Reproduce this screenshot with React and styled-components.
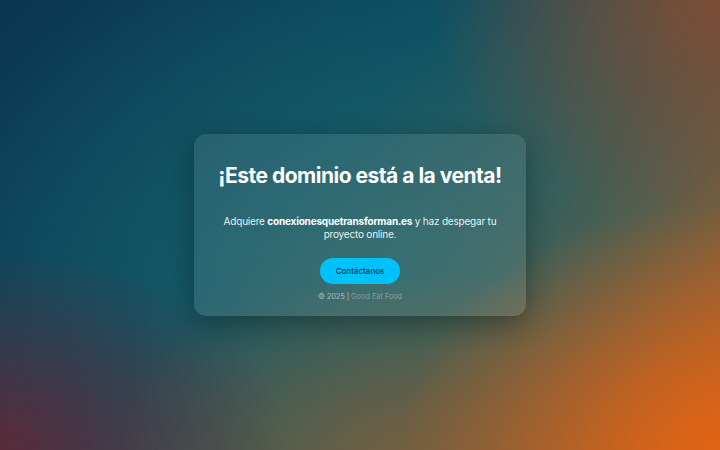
import React from "react";
import styled, { createGlobalStyle } from "styled-components";

const Global = createGlobalStyle`
  html, body { margin: 0; padding: 0; height: 100%; }
  body { font-family: Inter, "Noto Sans", sans-serif; }
  #root { height: 100%; }
`;

const Page = styled.div`
  height: 450px;
  width: 100%;
  display: flex;
  align-items: center;
  justify-content: center;
  background:
    radial-gradient(ellipse 45% 55% at 100% 100%, rgba(225,100,20,0.95), rgba(225,100,20,0) 100%),
    radial-gradient(ellipse 40% 50% at 100% 0%, rgba(130,75,50,0.9), rgba(130,75,50,0) 100%),
    radial-gradient(ellipse 40% 45% at 0% 100%, rgba(95,40,55,0.95), rgba(95,40,55,0) 100%),
    radial-gradient(ellipse 40% 40% at 55% 100%, rgba(125,95,60,0.7), rgba(125,95,60,0) 100%),
    radial-gradient(ellipse 60% 70% at 50% 55%, rgba(30,100,105,0.75), rgba(30,100,105,0) 100%),
    linear-gradient(135deg, #0a3550 0%, #0b4d62 40%, #3b5a55 60%, #c5601f 100%);
  overflow: hidden;
`;

const Card = styled.div`
  width: 332px;
  box-sizing: border-box;
  padding: 29px 16px 14px;
  border-radius: 12px;
  background: rgba(255, 255, 255, 0.09);
  box-shadow: 0 8px 28px rgba(0, 0, 0, 0.32);
  text-align: center;
  color: #ffffff;
  display: flex;
  flex-direction: column;
  align-items: center;
`;

const Title = styled.h1`
  margin: 0;
  font-size: 21px;
  line-height: 26px;
  font-weight: 700;
  letter-spacing: -0.5px;
  white-space: nowrap;
`;

const Text = styled.p`
  margin: 26px 0 0;
  max-width: 290px;
  font-size: 10px;
  line-height: 13px;
  letter-spacing: -0.2px;
  color: rgba(255, 255, 255, 0.92);
  strong { font-weight: 700; color: #fff; }
`;

const Button = styled.button`
  margin-top: 17px;
  width: 80px;
  height: 26px;
  border: none;
  border-radius: 13px;
  background: #00c2fb;
  color: #0b3550;
  font-family: Inter, sans-serif;
  font-size: 8px;
  font-weight: 500;
  cursor: pointer;
`;

const Footer = styled.div`
  margin-top: 7px;
  font-size: 7.5px;
  line-height: 11px;
  letter-spacing: -0.1px;
  color: rgba(255, 255, 255, 0.55);
  span { color: rgba(255, 255, 255, 0.35); }
`;

export default function App() {
  return (
    <>
      <Global />
      <Page>
        <Card>
          <Title>¡Este dominio está a la venta!</Title>
          <Text>
            Adquiere <strong>conexionesquetransforman.es</strong> y haz despegar tu proyecto online.
          </Text>
          <Button>Contáctanos</Button>
          <Footer>
            © 2025 | <span>Good Eat Food</span>
          </Footer>
        </Card>
      </Page>
    </>
  );
}
